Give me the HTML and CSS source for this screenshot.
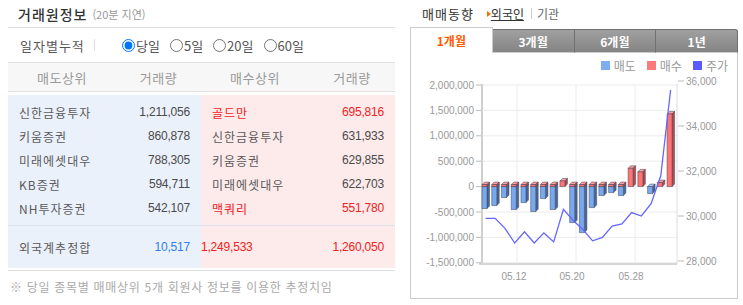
FILE: index.html
```html
<!DOCTYPE html>
<html lang="ko">
<head>
  <meta charset="UTF-8" />
  <meta name="viewport" content="width=device-width, initial-scale=1.0"/>
  <title>거래원정보 · 매매동향</title>
  <link rel="stylesheet" href="styles.css">
</head>
<body>

  <div class="wrap">

    <!-- 거래원정보 -->
    <section class="broker">
      <div class="title-row">
        <h2>거래원정보</h2>
        <span class="delay">(20분 지연)</span>
      </div>

      <div class="period">
        <span class="period-label">일자별누적</span>
        <span class="sep"></span>
        <label class="radio"><input type="radio" name="period" checked>당일</label>
        <label class="radio"><input type="radio" name="period">5일</label>
        <label class="radio"><input type="radio" name="period">20일</label>
        <label class="radio"><input type="radio" name="period">60일</label>
      </div>

      <div class="rank-head">
        <span>매도상위</span>
        <span>거래량</span>
        <span>매수상위</span>
        <span>거래량</span>
      </div>

      <div class="rank-body">
        <div class="row">
          <span class="name">신한금융투자</span><span class="vol">1,211,056</span>
          <span class="name red">골드만</span><span class="vol red">695,816</span>
        </div>
        <div class="row">
          <span class="name">키움증권</span><span class="vol">860,878</span>
          <span class="name">신한금융투자</span><span class="vol">631,933</span>
        </div>
        <div class="row">
          <span class="name">미래에셋대우</span><span class="vol">788,305</span>
          <span class="name">키움증권</span><span class="vol">629,855</span>
        </div>
        <div class="row">
          <span class="name">KB증권</span><span class="vol">594,711</span>
          <span class="name">미래에셋대우</span><span class="vol">622,703</span>
        </div>
        <div class="row">
          <span class="name">NH투자증권</span><span class="vol">542,107</span>
          <span class="name red">맥쿼리</span><span class="vol red">551,780</span>
        </div>
      </div>

      <div class="rank-total row">
        <span class="name">외국계추정합</span><span class="vol blue">10,517</span>
        <span class="vol red net">1,249,533</span><span class="vol red">1,260,050</span>
      </div>

      <p class="note">※ 당일 종목별 매매상위 5개 회원사 정보를 이용한 추정치임</p>
    </section>

    <!-- 매매동향 -->
    <section class="trend">
      <div class="trend-head">
        <h2>매매동향</h2>
        <span class="arrow"></span>
        <a class="tab-link">외국인</a>
        <span class="bar-sep"></span>
        <a class="tab-link off">기관</a>
      </div>

      <div class="tabs">
        <div class="tab on">1개월</div>
        <div class="tab">3개월</div>
        <div class="tab">6개월</div>
        <div class="tab last">1년</div>
      </div>

      <div class="chart">
        <div class="legend">
          <span><i class="sw sell"></i>매도</span>
          <span><i class="sw buy"></i>매수</span>
          <span><i class="sw price"></i>주가</span>
        </div>

        <svg class="plot" width="326" height="220" viewBox="411 77 326 220">
          <g stroke="#ececec" stroke-width="1">
            <path d="M483 85H677M483 110.4H677M483 135.8H677M483 161.2H677M483 186.6H677M483 212H677M483 237.4H677M483 262.8H677"/>
            <path d="M517 85V263M576 85V263M635 85V263"/>
          </g>
          <path d="M482 84V264" stroke="#cfcfcf" stroke-width="2"/>
          <path d="M479 264H677" stroke="#d6d6d6" stroke-width="2"/>
          <path d="M677 84V264" stroke="#dcdcdc" stroke-width="1"/>
          <g stroke="#bbb" stroke-width="1">
            <path d="M476 85H481M476 110.4H481M476 135.8H481M476 161.2H481M476 186.6H481M476 212H481M476 237.4H481M476 262.8H481"/>
            <path d="M678 81H684M678 126H684M678 171H684M678 216H684M678 261H684"/>
          </g>
          <g class="axis" text-anchor="end">
            <text x="474" y="88.5">2,000,000</text>
            <text x="474" y="113.9">1,500,000</text>
            <text x="474" y="139.3">1,000,000</text>
            <text x="474" y="164.7">500,000</text>
            <text x="474" y="190.1">0</text>
            <text x="474" y="215.5">-500,000</text>
            <text x="474" y="240.9">-1,000,000</text>
            <text x="474" y="266.3">-1,500,000</text>
          </g>
          <g class="axis">
            <text x="686" y="84.5">36,000</text>
            <text x="686" y="129.5">34,000</text>
            <text x="686" y="174.5">32,000</text>
            <text x="686" y="219.5">30,000</text>
            <text x="686" y="264.5">28,000</text>
          </g>
          <g class="axis" text-anchor="middle">
            <text x="514" y="280">05.12</text>
            <text x="572" y="280">05.20</text>
            <text x="631" y="280">05.28</text>
          </g>
          <g id="bars" stroke="#3e4256" stroke-width="0.5"></g>
          <polyline id="price-line" fill="none" stroke="#6666ff" stroke-width="1.3"/>
        </svg>
      </div>
    </section>

  </div>

  <script>
    const sell = [-433000, -374000, -217000, -453000, -315000, -492000, -236000, -453000, 0, -709000,
                  -906000, -413000, -177000, -118000, -177000, 0, 0, -138000, 0, 0];
    const buy = [40000, 40000, 40000, 40000, 40000, 40000, 40000, 40000, 110000, 40000,
                 40000, 40000, 40000, 40000, 40000, 360000, 290000, 0, 80000, 1430000];
    const price = [29900, 29900, 29450, 28800, 29300, 28800, 29250, 28850, 30300, 29800,
                   29400, 28900, 29050, 29550, 29650, 30150, 30000, 30550, 31800, 35600];

    const svgNS = "http://www.w3.org/2000/svg";
    const zero = 186.6;
    const volY = v => zero - v * 25.4 / 500000;
    const priceY = p => 261 - (p - 28000) * 45 / 2000;
    const barX = i => 482 + i * 9.74;

    const blue = { front: "#78a9ef", side: "#46689c", top: "#a9c8f5" };
    const red = { front: "#ff7373", side: "#b44a4a", top: "#ff9e9e" };
    const bars = document.getElementById("bars");

    function poly(points, fill) {
      const el = document.createElementNS(svgNS, "polygon");
      el.setAttribute("points", points.map(p => p.join(",")).join(" "));
      el.setAttribute("fill", fill);
      bars.appendChild(el);
    }

    function drawBar(x, v, c) {
      if (!v) return;
      const w = 5, d = 2.5;
      const top = Math.min(zero, volY(v));
      const bottom = Math.max(zero, volY(v));
      poly([[x, top], [x + d, top - d], [x + w + d, top - d], [x + w, top]], c.top);
      poly([[x + w, top], [x + w + d, top - d], [x + w + d, bottom - d], [x + w, bottom]], c.side);
      poly([[x, top], [x + w, top], [x + w, bottom], [x, bottom]], c.front);
    }

    sell.forEach((v, i) => {
      drawBar(barX(i), v, blue);
      drawBar(barX(i), buy[i], red);
    });

    const pts = price.map((p, i) => (barX(i) + 3.5).toFixed(1) + "," + priceY(p).toFixed(1));
    document.getElementById("price-line").setAttribute("points", pts.join(" "));
  </script>

</body>
</html>
```

FILE: styles.css
```css
* {
  margin: 0;
  padding: 0;
  box-sizing: border-box;
}

body, html {
  height: 100%;
  overflow: hidden;
  background-color: #fff;
}

body {
  font-family: "Noto Sans CJK KR", sans-serif;
  color: #555;
}

.wrap {
  display: flex;
  padding-left: 8px;
}

/* 거래원정보 */
.broker {
  width: 387px;
}

.title-row {
  display: flex;
  align-items: center;
  gap: 5px;
  height: 28px;
  padding-left: 10px;
  border-bottom: 1px solid #e1e1e1;
}

.title-row h2 {
  font-size: 14px;
  font-weight: 500;
  letter-spacing: 1px;
  color: #333;
  line-height: 1;
}

.delay {
  font-size: 11px;
  color: #999;
}

.period {
  display: flex;
  align-items: center;
  height: 35px;
  padding-left: 12px;
  border-bottom: 1px solid #e1e1e1;
  font-size: 13px;
}

.period-label {
  width: 74px;
  letter-spacing: 1px;
}

.sep {
  width: 1px;
  height: 12px;
  background-color: #ddd;
  margin-right: 27px;
}

.radio {
  display: flex;
  align-items: center;
  margin-right: 10px;
}

.radio input {
  width: 13px;
  height: 13px;
  margin: 0 1px 0 0;
}

.rank-head {
  display: grid;
  grid-template-columns: 108px 85px 108px 86px;
  align-items: center;
  height: 29px;
  margin-bottom: 3px;
  background-color: #f7f7f7;
  border-bottom: 1px solid #e1e1e1;
  text-align: center;
  font-size: 13px;
  letter-spacing: 0.5px;
  color: #999;
}

.rank-body,
.rank-total {
  background: linear-gradient(90deg, #eaf1fb 193px, #fdeaea 193px);
}

.rank-body {
  padding: 5px 0;
  border-bottom: 1px solid #dde2ea;
}

.row {
  display: grid;
  grid-template-columns: 108px 85px 108px 86px;
  align-items: center;
  height: 24px;
  font-size: 12px;
}

.name {
  padding-left: 11px;
  color: #5a5a5a;
  letter-spacing: 1px;
  white-space: nowrap;
}

.vol {
  padding-right: 11px;
  text-align: right;
  font-family: "Liberation Sans", Arial, sans-serif;
  letter-spacing: -0.2px;
  color: #4a4a4a;
}

.vol.net {
  padding: 0;
  text-align: left;
}

.red {
  color: #ee2222;
}

.blue {
  color: #2f7fe8;
}

.rank-total {
  height: 42px;
  margin-bottom: 2px;
}

.note {
  padding: 8px 0 0 2px;
  border-top: 1px solid #ddd;
  font-size: 12px;
  line-height: 16px;
  letter-spacing: 0.7px;
  color: #aaa;
}

/* 매매동향 */
.trend {
  width: 328px;
  margin-left: 15px;
}

.trend-head {
  display: flex;
  align-items: center;
  height: 27px;
  padding-left: 12px;
}

.trend-head h2 {
  font-size: 13px;
  font-weight: normal;
  letter-spacing: 1px;
  color: #333;
  margin-right: 13px;
}

.arrow {
  border-left: 4px solid #ff6a00;
  border-top: 3px solid transparent;
  border-bottom: 3px solid transparent;
}

.tab-link {
  font-size: 12px;
  color: #333;
  text-decoration: underline;
}

.tab-link.off {
  color: #666;
  text-decoration: none;
}

.bar-sep {
  width: 1px;
  height: 11px;
  background-color: #ccc;
  margin: 0 5px 0 7px;
}

.tabs {
  display: flex;
  align-items: flex-end;
  height: 26px;
}

.tab {
  flex: 1;
  display: flex;
  align-items: center;
  justify-content: center;
  height: 24px;
  background: linear-gradient(#a0a0a0, #848484);
  border: 1px solid #707070;
  border-left: 0;
  border-bottom: 1px solid #ccc;
  color: #fff;
  font-size: 12px;
  font-weight: bold;
}

.tab.on {
  height: 26px;
  background: #fff;
  border: 1px solid #ccc;
  border-bottom: 0;
  color: #ff5a00;
}

.tab.last {
  border-top-right-radius: 3px;
}

.chart {
  height: 246px;
  border: 1px solid #ccc;
  border-top: 0;
}

.legend {
  display: flex;
  justify-content: flex-end;
  align-items: center;
  gap: 11px;
  height: 24px;
  padding-right: 9px;
  font-size: 12px;
  color: #999;
}

.legend span {
  display: flex;
  align-items: center;
}

.sw {
  display: inline-block;
  width: 9px;
  height: 9px;
  margin-right: 4px;
}

.sw.sell {
  background-color: #7eaef2;
}

.sw.buy {
  background-color: #ff7b7b;
}

.sw.price {
  background-color: #5a5aff;
}

.plot {
  display: block;
}

.axis {
  font-family: "Liberation Sans", Arial, sans-serif;
  font-size: 10px;
  fill: #999;
}
```
